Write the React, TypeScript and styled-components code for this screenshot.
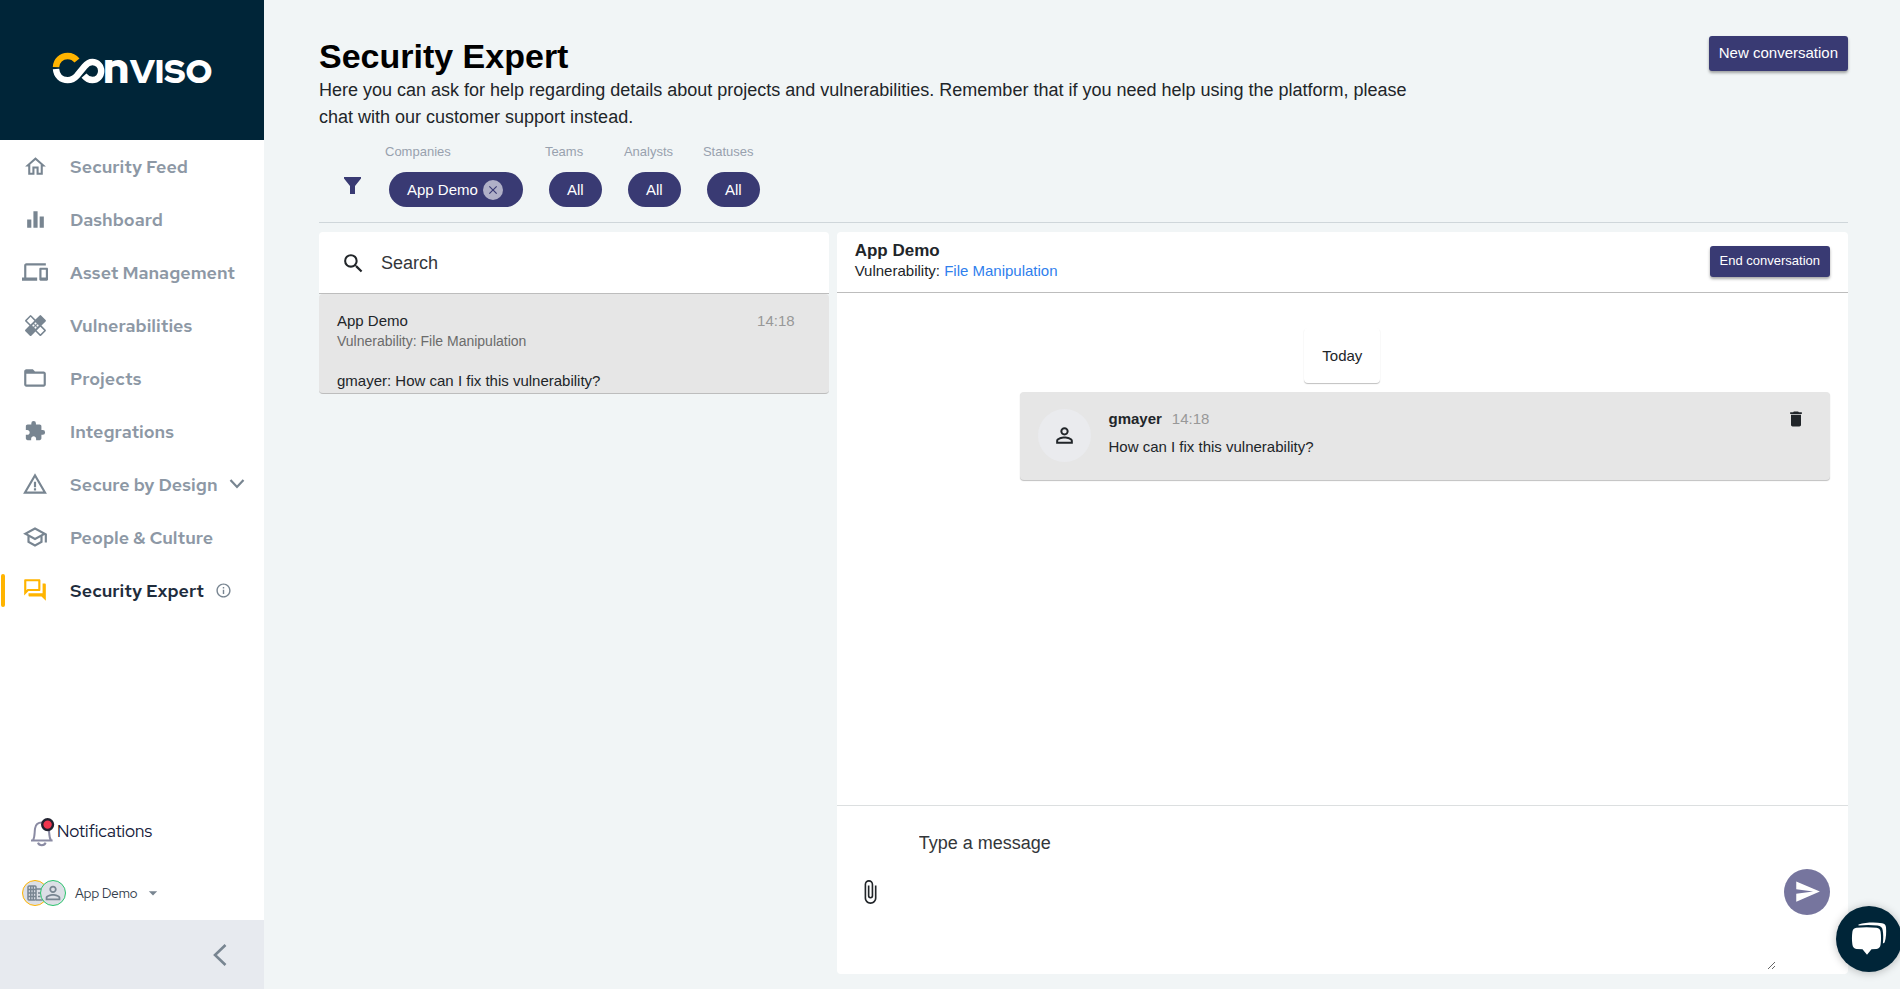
import React from "react";
import styled, { createGlobalStyle } from "styled-components";
import {
  MdOutlineHome,
  MdEqualizer,
  MdDevices,
  MdHealing,
  MdFolderOpen,
  MdExtension,
  MdWarningAmber,
  MdOutlineSchool,
  MdOutlineQuestionAnswer,
  MdInfoOutline,
  MdSearch,
  MdDelete,
  MdAttachFile,
  MdSend,
  MdPersonOutline,
  MdArrowDropDown,
  MdClose,
} from "react-icons/md";

const navy = "#002538";
const indigo = "#393a73";
const amber = "#ffb400";
const slate = "#788591";
const sans = `"Liberation Sans", Arial, sans-serif`;
const brand = `"Red Hat Display", Inter, sans-serif`;
const brandText = `"Red Hat Text", Inter, sans-serif`;

const GlobalStyle = createGlobalStyle`
  * { box-sizing: border-box; }
  body { margin: 0; background: #f1f5f6; font-family: ${sans}; color: #212529; }
  button, input, textarea { font-family: inherit; color: inherit; }
  h1, h2, p { margin: 0; }
  svg { display: block; flex-shrink: 0; }
`;

const Page = styled.div`
  display: flex;
  min-height: 100vh;
`;

/* Sidebar */

const Sidebar = styled.aside`
  display: flex;
  flex-direction: column;
  flex: 0 0 264px;
  background: #fff;
  font-family: ${brand};
`;

const LogoArea = styled.a`
  display: flex;
  align-items: center;
  justify-content: center;
  height: 140px;
  background: ${navy};
`;

const NavItem = styled.a<{ $active?: boolean }>`
  display: flex;
  align-items: center;
  height: 53px;
  padding: 0 0 1px 1px;
  text-decoration: none;
  font-family: ${brandText};
  font-size: 18px;
  font-weight: 600;
  white-space: nowrap;
  color: ${(p) => (p.$active ? "#1f2d3d" : "#8d98a5")};
  &::before {
    content: "";
    width: 4px;
    height: 33px;
    border-radius: 2px;
    background: ${(p) => (p.$active ? amber : "transparent")};
  }
`;

const NavIcon = styled.span<{ $active?: boolean }>`
  display: flex;
  justify-content: center;
  width: 60px;
  margin-right: 5px;
  color: ${(p) => (p.$active ? amber : slate)};
`;

const NavMark = styled.span`
  display: flex;
  margin-left: 11px;
  color: ${slate};
`;

const Spacer = styled.div`
  flex: 1;
`;

const Notifications = styled.button`
  display: flex;
  align-items: center;
  height: 40px;
  margin-bottom: 24px;
  padding: 0 0 0 29px;
  border: 0;
  background: none;
  font-size: 17px;
  font-weight: 400;
  color: #16203a;
`;

const Account = styled.button`
  display: flex;
  align-items: center;
  height: 36px;
  margin-bottom: 9px;
  padding: 0 0 0 22px;
  border: 0;
  background: none;
  font-size: 13px;
  color: #34404c;
`;

const AccountName = styled.span`
  margin: 0 5px 0 9px;
`;

const RoundIcon = styled.span<{ $ring: string; $overlap?: boolean }>`
  display: flex;
  align-items: center;
  justify-content: center;
  width: 26px;
  height: 26px;
  margin-left: ${(p) => (p.$overlap ? "-8px" : "0")};
  border: 1px solid ${(p) => p.$ring};
  border-radius: 50%;
  background: #dcdfe6;
  color: ${slate};
`;

const Collapse = styled.button`
  display: flex;
  align-items: center;
  justify-content: flex-end;
  height: 69px;
  padding: 0 37px 0 0;
  border: 0;
  background: #e7eaef;
`;

/* Main column */

const Main = styled.main`
  display: flex;
  flex-direction: column;
  flex: 1;
  min-width: 0;
  padding: 36px 52px 15px 55px;
`;

const PageHeader = styled.header`
  display: flex;
  justify-content: space-between;
  align-items: flex-start;
`;

const Intro = styled.div`
  width: 72%;
`;

const Title = styled.h1`
  font-size: 34px;
  line-height: 41px;
  color: #000;
`;

const Lead = styled.p`
  font-size: 18px;
  line-height: 27px;
`;

const PrimaryButton = styled.button<{ $small?: boolean }>`
  height: ${(p) => (p.$small ? 31 : 35)}px;
  padding: 0 10px 2px;
  border: 0;
  border-radius: 3px;
  background: ${indigo};
  color: #fff;
  font-size: ${(p) => (p.$small ? 13 : 15)}px;
  white-space: nowrap;
  box-shadow: 0 2px 3px rgba(0, 0, 0, 0.35);
`;

const Filters = styled.div`
  display: flex;
  align-items: flex-end;
  padding: 11px 0 15px 25px;
  border-bottom: 1px solid #cfd6da;
`;

const FilterIcon = styled.span`
  height: 30px;
  margin-right: 24px;
  color: ${indigo};
`;

const FilterGroup = styled.div`
  margin-right: 22px;
`;

const FilterLabel = styled.div`
  width: 0;
  margin-bottom: 10px;
  font-size: 13px;
  line-height: 20px;
  color: #98a1ae;
`;

const Chip = styled.div`
  display: flex;
  align-items: center;
  height: 35px;
  margin-left: 4px;
  padding: 0 20px 0 18px;
  border-radius: 18px;
  background: ${indigo};
  color: #fff;
  font-size: 15px;
`;

const ChipButton = styled(Chip).attrs({ as: "button" })`
  justify-content: center;
  min-width: 53px;
  padding: 0;
  border: 0;
`;

const ChipRemove = styled.button`
  display: flex;
  align-items: center;
  justify-content: center;
  width: 20px;
  height: 20px;
  margin-left: 5px;
  padding: 0;
  border: 0;
  border-radius: 50%;
  background: #b0b0c7;
  color: ${indigo};
`;

const Columns = styled.div`
  display: grid;
  grid-template-columns: calc(100% / 3) 1fr;
  gap: 8px;
  flex: 1;
  margin-top: 9px;
`;

const ConversationList = styled.section`
  align-self: start;
`;

const SearchBox = styled.label`
  display: flex;
  align-items: center;
  height: 62px;
  padding: 1px 0 0 22px;
  border-bottom: 1px solid #bdbdbd;
  border-radius: 4px 4px 0 0;
  background: #fff;
`;

const SearchInput = styled.input`
  flex: 1;
  min-width: 0;
  margin-left: 15px;
  padding: 0;
  border: 0;
  outline: 0;
  background: none;
  font-size: 18px;
  &::placeholder {
    color: #33363a;
    opacity: 1;
  }
`;

const Conversation = styled.a`
  display: block;
  height: 100px;
  padding: 17px 34px 0 18px;
  border-bottom: 1px solid #bdbdbd;
  border-radius: 4px;
  background: #e6e6e6;
  color: #212529;
  text-decoration: none;
  font-size: 15px;
  line-height: 20px;
`;

const ConversationTop = styled.div`
  display: flex;
  justify-content: space-between;
`;

const Time = styled.time`
  color: #989898;
`;

const Topic = styled.div`
  margin-bottom: 20px;
  font-size: 14px;
  color: #6b6b6b;
`;

const Chat = styled.section`
  display: flex;
  flex-direction: column;
  border-radius: 4px;
  background: #fff;
`;

const ChatHeader = styled.header`
  display: flex;
  align-items: center;
  justify-content: space-between;
  height: 61px;
  padding: 0 18px 2px;
  border-bottom: 1px solid #bdbdbd;
`;

const ChatTitle = styled.h2`
  font-size: 17px;
  line-height: 20px;
`;

const ChatTopic = styled.p`
  font-size: 15px;
  line-height: 20px;
`;

const TopicLink = styled.a`
  color: #2f80ed;
  text-decoration: none;
`;

const Messages = styled.div`
  display: flex;
  flex-direction: column;
  flex: 1;
  padding: 35px 18px;
`;

const DayCard = styled.div`
  align-self: center;
  padding: 18px 18px 17px;
  border-radius: 4px;
  font-size: 15px;
  line-height: 20px;
  box-shadow: 0 1px 1px rgba(0, 0, 0, 0.25);
`;

const Message = styled.article`
  display: flex;
  align-self: flex-end;
  width: 83%;
  height: 88px;
  margin-top: 9px;
  padding: 17px 24px 0 18px;
  border-radius: 4px;
  background: #e6e6e6;
  box-shadow: 0 1px 1px rgba(0, 0, 0, 0.25);
  font-size: 15px;
  line-height: 20px;
`;

const Avatar = styled.span`
  display: flex;
  align-items: center;
  justify-content: center;
  width: 53px;
  height: 53px;
  margin-right: 17px;
  border-radius: 50%;
  background: #eaebee;
`;

const MessageBody = styled.div`
  flex: 1;
`;

const MessageMeta = styled.div`
  display: flex;
  gap: 10px;
  margin-bottom: 8px;
`;

const IconButton = styled.button`
  display: flex;
  align-items: center;
  justify-content: center;
  align-self: flex-start;
  padding: 0;
  border: 0;
  background: none;
`;

const Composer = styled.form`
  display: flex;
  align-items: center;
  height: 169px;
  padding: 7px 18px 4px 19px;
  border-top: 1px solid #dcdfe0;
`;

const AttachButton = styled(IconButton)`
  align-self: center;
  width: 28px;
  margin-right: 35px;
`;

const MessageInput = styled.textarea`
  flex: 1;
  align-self: stretch;
  margin-right: 8px;
  padding: 18px 0;
  border: 0;
  outline: 0;
  background: none;
  font-size: 18px;
  line-height: 24px;
  &::placeholder {
    color: #33363a;
    opacity: 1;
  }
`;

const SendButton = styled.button`
  display: flex;
  align-items: center;
  justify-content: center;
  width: 46px;
  height: 46px;
  padding: 0;
  border: 0;
  border-radius: 50%;
  background: #76759e;
  color: #fff;
`;

const SupportButton = styled.button`
  position: fixed;
  right: -2px;
  bottom: 17px;
  display: flex;
  align-items: center;
  justify-content: center;
  width: 66px;
  height: 66px;
  padding: 0;
  border: 0;
  border-radius: 50%;
  background: ${navy};
  box-shadow: 0 1px 8px rgba(0, 0, 0, 0.25);
`;

const Logo = () => (
  <svg width="168" height="80" viewBox="48 30 168 80" aria-label="Conviso">
    <path d="M56 67.2 C56.2 60.5 61.4 56 67.6 56 C71.4 56 74.6 57.6 77 60.6" fill="none" stroke={amber} strokeWidth="6.4" />
    <path
      d="M56 69 C56.6 76 61.4 80.1 67.6 80.1 C71.6 80.1 74.4 78.6 77 75.6 L84.6 66.4 C87 63.4 89.2 62 92.4 62 C97.4 62 101.2 66 101.2 71 C101.2 76.2 97.4 80 92.4 80 C89 80 86.4 78.4 84 75.6"
      fill="none"
      stroke="#fff"
      strokeWidth="6.4"
    />
    <g fill="#fff" fontFamily="'Red Hat Display', Inter, sans-serif" fontWeight="900">
      <text x="103" y="83" fontSize="43">n</text>
      <text x="130" y="83" fontSize="33">VISO</text>
    </g>
  </svg>
);

const Bell = () => (
  <svg width="28" height="32" viewBox="0 0 28 32">
    <g fill="none" stroke="#8a8ba3" strokeWidth="2">
      <path d="M2 25.4H23.6M4 25.4C6 22 5.4 18 6 13.6C6.6 9.6 9 7.6 12.8 7.6C16.6 7.6 19.2 9.8 19.8 13.6C20.4 18 19.8 22 22 25.4" />
      <path d="M9 27.6C10 31 15.6 31 16.6 27.6" />
    </g>
    <circle cx="18.6" cy="9.6" r="5.4" fill="#f0364e" stroke="#222230" strokeWidth="2.4" />
  </svg>
);

const Building = () => (
  <svg width="17" height="16" viewBox="0 0 17 16" fill="none" stroke="currentColor" strokeWidth="1.5">
    <rect x="1" y="1" width="8" height="14" rx="1" />
    <path d="M3.7 1V15M6.3 1V15M1 4.5H9M1 8H9M1 11.5H9M9 4H15a1 1 0 0 1 1 1V14a1 1 0 0 1-1 1H9M11 8h2.500M11 11.500h2.500" />
  </svg>
);

const Funnel = () => (
  <svg width="17" height="17" viewBox="0 0 17 17" fill="currentColor">
    <path d="M0 0H17V1.500L11 9V17H6V9L0 1.500Z" />
  </svg>
);

const SupportGlyph = () => (
  <svg width="36" height="34" viewBox="0 0 36 34" fill="#fff">
    <path d="M5.500 5.800C12 5 19 5 25.500 5.800C28 6.200 29.300 7.400 29.600 9.800C30.200 14.200 30.200 18.200 29.600 22.600C29.300 25.400 28 26.600 25.500 26.900L20.500 27.300L16 32.800L11.500 27.300L5.500 26.900C3 26.600 1.700 25.400 1.400 22.600C.8 18.200.8 14.200 1.400 9.800C1.700 7.400 3 6.200 5.500 5.800Z" />
    <path d="M7.500 2.600C15 .2 24 .2 31.200 1.200C33.600 1.600 34.800 2.800 35 5.200C35.400 10.200 35.200 15.800 33.600 20.600L31.900 21.600C32.400 17 32.400 12.600 31.700 8.200C31.300 5.400 29.600 3.900 26.500 3.500C20 2.600 14 2.800 7.500 3.400Z" />
  </svg>
);

const navItems = [
  { label: "Security Feed", Icon: MdOutlineHome },
  { label: "Dashboard", Icon: MdEqualizer },
  { label: "Asset Management", Icon: MdDevices, size: 26 },
  { label: "Vulnerabilities", Icon: MdHealing },
  { label: "Projects", Icon: MdFolderOpen, size: 26 },
  { label: "Integrations", Icon: MdExtension, size: 22 },
  { label: "Secure by Design", Icon: MdWarningAmber, size: 26, expandable: true },
  { label: "People & Culture", Icon: MdOutlineSchool, size: 26 },
  { label: "Security Expert", Icon: MdOutlineQuestionAnswer, size: 26, active: true },
];

export default function App() {
  return (
    <Page>
      <GlobalStyle />
      <Sidebar>
        <LogoArea href="#">
          <Logo />
        </LogoArea>
        <nav>
          {navItems.map(({ label, Icon, size, active, expandable }) => (
            <NavItem key={label} href="#" $active={active}>
              <NavIcon $active={active}>
                <Icon size={size ?? 25} />
              </NavIcon>
              {label}
              {expandable && (
                <NavMark>
                  <svg width="16" height="12" viewBox="0 0 16 12" fill="none" stroke="currentColor" strokeWidth="2.2">
                    <path d="M1.500 2L8 9L14.500 2" />
                  </svg>
                </NavMark>
              )}
              {active && (
                <NavMark>
                  <MdInfoOutline size={17} />
                </NavMark>
              )}
            </NavItem>
          ))}
        </nav>
        <Spacer />
        <Notifications>
          <Bell />
          Notifications
        </Notifications>
        <Account>
          <RoundIcon $ring={amber}>
            <Building />
          </RoundIcon>
          <RoundIcon $ring="#2bc46d" $overlap>
            <MdPersonOutline size={22} />
          </RoundIcon>
          <AccountName>App Demo</AccountName>
          <MdArrowDropDown size={20} color={slate} />
        </Account>
        <Collapse aria-label="Collapse menu">
          <svg width="14" height="22" viewBox="0 0 14 22" fill="none" stroke={slate} strokeWidth="2.6">
            <path d="M12.500 1L2 11L12.500 21" />
          </svg>
        </Collapse>
      </Sidebar>

      <Main>
        <PageHeader>
          <Intro>
            <Title>Security Expert</Title>
            <Lead>
              Here you can ask for help regarding details about projects and vulnerabilities. Remember that if you
              need help using the platform, please chat with our customer support instead.
            </Lead>
          </Intro>
          <PrimaryButton>New conversation</PrimaryButton>
        </PageHeader>

        <Filters>
          <FilterIcon>
            <Funnel />
          </FilterIcon>
          <FilterGroup>
            <FilterLabel>Companies</FilterLabel>
            <Chip>
              App Demo
              <ChipRemove aria-label="Remove App Demo">
                <MdClose size={14} />
              </ChipRemove>
            </Chip>
          </FilterGroup>
          {["Teams", "Analysts", "Statuses"].map((label) => (
            <FilterGroup key={label}>
              <FilterLabel>{label}</FilterLabel>
              <ChipButton>All</ChipButton>
            </FilterGroup>
          ))}
        </Filters>

        <Columns>
          <ConversationList>
            <SearchBox>
              <MdSearch size={25} />
              <SearchInput type="text" placeholder="Search" aria-label="Search" />
            </SearchBox>
            <Conversation href="#">
              <ConversationTop>
                <span>App Demo</span>
                <Time>14:18</Time>
              </ConversationTop>
              <Topic>Vulnerability: File Manipulation</Topic>
              <p>gmayer: How can I fix this vulnerability?</p>
            </Conversation>
          </ConversationList>

          <Chat>
            <ChatHeader>
              <div>
                <ChatTitle>App Demo</ChatTitle>
                <ChatTopic>
                  Vulnerability: <TopicLink href="#">File Manipulation</TopicLink>
                </ChatTopic>
              </div>
              <PrimaryButton $small>End conversation</PrimaryButton>
            </ChatHeader>
            <Messages>
              <DayCard>Today</DayCard>
              <Message>
                <Avatar>
                  <MdPersonOutline size={25} />
                </Avatar>
                <MessageBody>
                  <MessageMeta>
                    <strong>gmayer</strong>
                    <Time>14:18</Time>
                  </MessageMeta>
                  <p>How can I fix this vulnerability?</p>
                </MessageBody>
                <IconButton aria-label="Delete message">
                  <MdDelete size={20} />
                </IconButton>
              </Message>
            </Messages>
            <Composer>
              <AttachButton type="button" aria-label="Attach file">
                <MdAttachFile size={26} />
              </AttachButton>
              <MessageInput placeholder="Type a message" aria-label="Type a message" />
              <SendButton type="button" aria-label="Send">
                <MdSend size={27} />
              </SendButton>
            </Composer>
          </Chat>
        </Columns>
      </Main>

      <SupportButton aria-label="Support chat">
        <SupportGlyph />
      </SupportButton>
    </Page>
  );
}
